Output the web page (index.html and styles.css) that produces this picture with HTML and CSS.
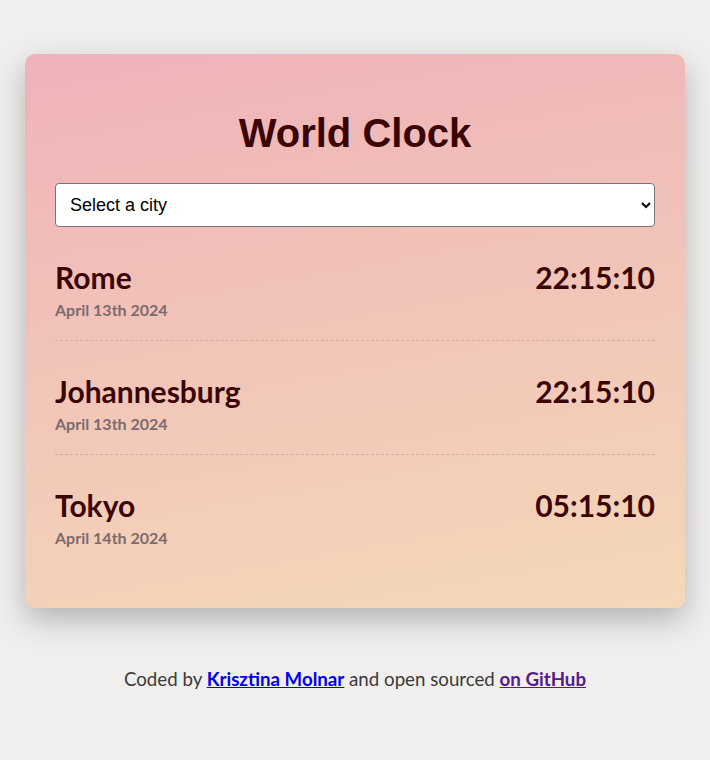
FILE: index.html
```html
<!DOCTYPE html>
<html lang="en">
<head>
<meta charset="utf-8">
<title>World Clock</title>
<link rel="stylesheet" href="styles.css">
</head>
<body>
<div class="container">
  <h1 class="title">World Clock</h1>
  <select class="city-select">
    <option>Select a city</option>
  </select>
  <div class="cities">
    <div class="city">
      <div>
        <h2 class="city-name">Rome</h2>
        <div class="date">April 13th 2024</div>
      </div>
      <div class="time">22:15:10</div>
    </div>
    <div class="city">
      <div>
        <h2 class="city-name">Johannesburg</h2>
        <div class="date">April 13th 2024</div>
      </div>
      <div class="time">22:15:10</div>
    </div>
    <div class="city">
      <div>
        <h2 class="city-name">Tokyo</h2>
        <div class="date">April 14th 2024</div>
      </div>
      <div class="time">05:15:10</div>
    </div>
  </div>
</div>
<footer class="footer">
  Coded by <a class="link" href="#">Krisztina Molnar</a> and open sourced <a class="link visited" href="#">on GitHub</a>
</footer>
</body>
</html>
```
FILE: styles.css
```css
body {
  margin: 0;
  background: #f0efed;
  font-family: Lato, "Open Sans", sans-serif;
}
.container {
  max-width: 600px;
  margin: 54px auto 0;
  padding: 30px 30px 40px;
  border-radius: 10px;
  background: linear-gradient(170deg, #efb2b9 0%, #f4d8b8 100%);
  box-shadow: 0 12px 30px rgba(0, 0, 0, 0.25);
}
.title {
  margin: 26px 0 27px;
  text-align: center;
  font-family: "Liberation Sans", Arial, sans-serif;
  font-size: 40px;
  line-height: 46px;
  font-weight: 700;
  color: #3a0505;
}
.city-select {
  display: block;
  width: 100%;
  height: 44px;
  padding: 0 10px;
  font-family: "Liberation Sans", Arial, sans-serif;
  font-size: 18px;
  color: #000;
  background: #fff;
  border: 1px solid #767676;
  border-radius: 4px;
}
.city {
  display: flex;
  justify-content: space-between;
  align-items: flex-start;
  padding: 33px 0 20px;
  border-bottom: 1px dashed #d3aca3;
}
.city:last-child {
  border-bottom: none;
}
.city-name {
  margin: 0;
  font-size: 30px;
  line-height: 34px;
  font-weight: 700;
  color: #3a0505;
}
.date {
  margin-top: 6px;
  font-size: 16px;
  line-height: 20px;
  font-weight: 700;
  color: #7b6b6e;
}
.time {
  font-size: 30px;
  line-height: 34px;
  font-weight: 700;
  color: #3a0505;
}
.footer {
  margin-top: 60px;
  text-align: center;
  font-size: 18.7px;
  color: #3a3a3a;
}
.link {
  color: #0000ee;
  font-weight: 700;
}
.link.visited {
  color: #551a8b;
}
```
